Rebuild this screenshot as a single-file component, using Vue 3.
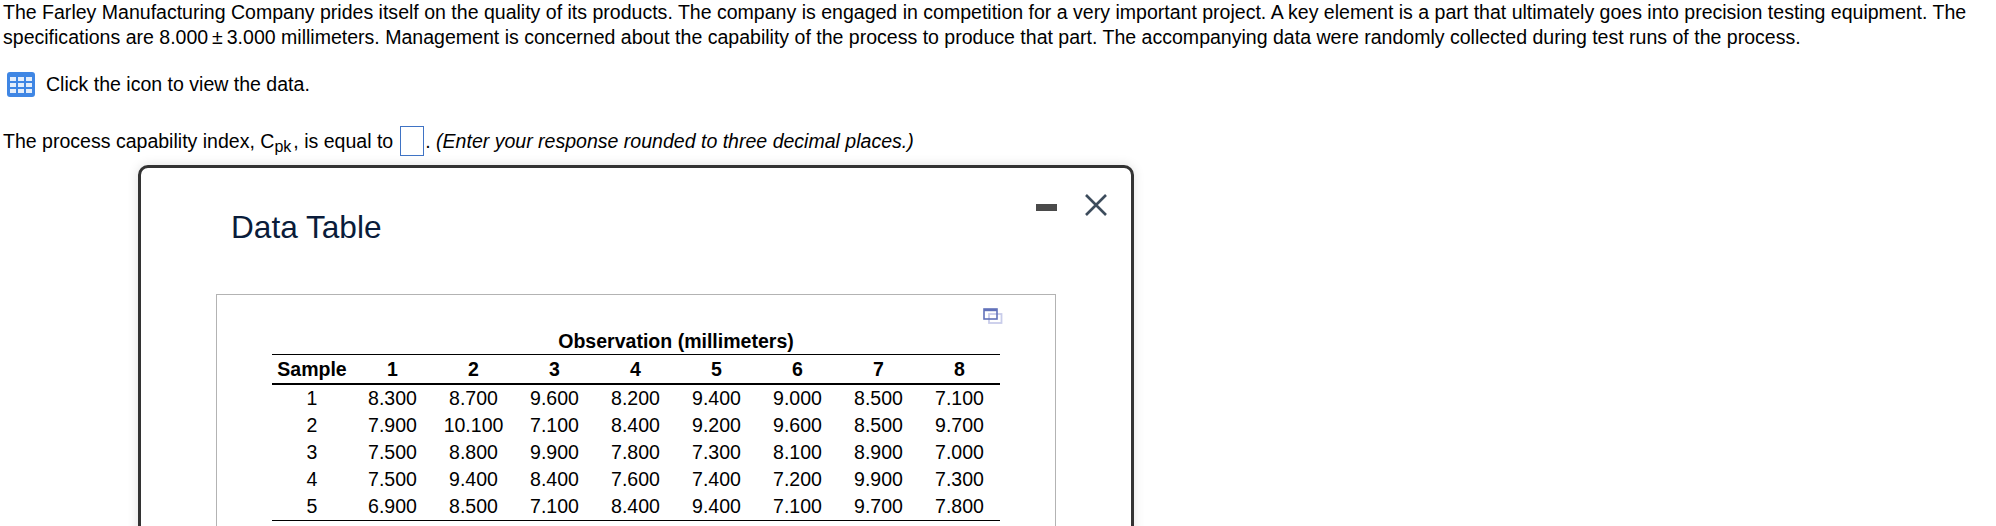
<script setup>
const cols = [1, 2, 3, 4, 5, 6, 7, 8]
const rows = [
  { id: 1, v: ['8.300', '8.700', '9.600', '8.200', '9.400', '9.000', '8.500', '7.100'] },
  { id: 2, v: ['7.900', '10.100', '7.100', '8.400', '9.200', '9.600', '8.500', '9.700'] },
  { id: 3, v: ['7.500', '8.800', '9.900', '7.800', '7.300', '8.100', '8.900', '7.000'] },
  { id: 4, v: ['7.500', '9.400', '8.400', '7.600', '7.400', '7.200', '9.900', '7.300'] },
  { id: 5, v: ['6.900', '8.500', '7.100', '8.400', '9.400', '7.100', '9.700', '7.800'] }
]
</script>

<template>
  <div class="page">
    <p class="intro">The Farley Manufacturing Company prides itself on the quality of its products. The company is engaged in competition for a very important project. A key element is a part that ultimately goes into precision testing equipment. The specifications are 8.000&#8201;±&#8201;3.000 millimeters. Management is concerned about the capability of the process to produce that part. The accompanying data were randomly collected during test runs of the process.</p>
    <div class="data-link">
      <svg class="grid-icon" width="28" height="25" viewBox="0 0 28 25">
        <rect x="0" y="0" width="28" height="25" rx="3" fill="#3f86e4" />
        <g fill="#e4eefb">
          <rect x="3" y="5" width="6" height="4" /><rect x="11" y="5" width="6" height="4" /><rect x="19" y="5" width="6" height="4" />
          <rect x="3" y="11" width="6" height="4" /><rect x="11" y="11" width="6" height="4" /><rect x="19" y="11" width="6" height="4" />
          <rect x="3" y="17" width="6" height="4" /><rect x="11" y="17" width="6" height="4" /><rect x="19" y="17" width="6" height="4" />
        </g>
      </svg>
      <span>Click the icon to view the data.</span>
    </div>
    <div class="question">
      <span>The process capability index, C<sub>pk</sub>, is equal to</span>
      <span class="answer"></span>
      <span>. <em>(Enter your response rounded to three decimal places.)</em></span>
    </div>
    <section class="modal">
      <div class="modal-head">
        <h2>Data Table</h2>
        <div class="controls">
          <span class="minimize"></span>
          <svg width="22" height="22" viewBox="0 0 22 22"><path d="M1 1 L21 21 M21 1 L1 21" stroke="#3d4c5c" stroke-width="2.6" fill="none" /></svg>
        </div>
      </div>
      <div class="box">
        <div class="box-tools">
          <svg width="20" height="16" viewBox="0 0 20 16">
            <rect x="6" y="6" width="12.5" height="9" fill="none" stroke="#c9cdea" stroke-width="1.8" />
            <rect x="1" y="1" width="13" height="10" fill="none" stroke="#6272ba" stroke-width="1.6" />
            <rect x="1" y="1" width="13" height="2.2" fill="#6272ba" />
          </svg>
        </div>
        <table>
          <colgroup>
            <col class="c-sample" />
            <col v-for="c in cols" :key="c" class="c-val" />
          </colgroup>
          <thead>
            <tr class="r-obs"><th></th><th colspan="8">Observation (millimeters)</th></tr>
            <tr class="r-head"><th>Sample</th><th v-for="c in cols" :key="c">{{ c }}</th></tr>
          </thead>
          <tbody>
            <tr v-for="r in rows" :key="r.id">
              <td>{{ r.id }}</td>
              <td v-for="(x, i) in r.v" :key="i">{{ x }}</td>
            </tr>
          </tbody>
        </table>
      </div>
    </section>
  </div>
</template>

<style>
html, body { margin: 0; overflow: hidden; background: #fff; }
</style>

<style scoped>
.page {
  height: 526px;
  overflow: hidden;
  padding: 0 0 0 3px;
  box-sizing: border-box;
  font-family: "Liberation Sans", Arial, sans-serif;
  font-size: 19.55px;
  color: #000;
}
.intro { margin: 0; width: 1975px; line-height: 25px; height: 50px; }
.data-link { display: flex; align-items: center; gap: 11px; margin-top: 21px; margin-left: 4px; height: 27px; }
.grid-icon { display: block; }
.question { display: flex; align-items: center; margin-top: 28px; height: 30px; white-space: pre; }
sub { font-size: 16px; line-height: 0; margin-right: 2px; }
.answer { display: block; width: 22px; height: 28px; border: 1px solid #3f73c4; margin: 0 1px 0 7px; }
.modal {
  width: 996px;
  height: 500px;
  box-sizing: border-box;
  margin: 9px 0 0 135px;
  border: 3px solid #333;
  border-radius: 10px;
  background: #fff;
  box-shadow: 0 0 12px rgba(0, 0, 0, .12);
}
.modal-head { display: flex; justify-content: space-between; padding: 26px 24px 0 90px; height: 126px; box-sizing: border-box; }
h2 { margin: 13px 0 0; font-weight: 400; font-size: 31.6px; line-height: 40px; color: #0a1c3a; }
.controls { display: flex; align-items: flex-start; gap: 28px; }
.minimize { display: block; width: 21px; height: 7px; margin-top: 10px; background: #4a4a4a; }
.box { width: 840px; height: 400px; box-sizing: border-box; margin-left: 75px; border: 1px solid #b3b3b3; padding-top: 13px; }
.box-tools { display: flex; justify-content: flex-end; padding-right: 52px; height: 16px; }
table { border-collapse: collapse; table-layout: fixed; width: 728px; margin: 4px 0 0 55px; }
th, td { padding: 0; text-align: center; }
.c-sample { width: 80px; }
.c-val { width: 81px; }
.r-obs th { height: 26px; border-bottom: 1px solid #000; }
.r-head th { height: 28px; border-bottom: 2px solid #000; }
td { height: 27px; }
tbody tr:last-child td { border-bottom: 1px solid #000; }
</style>
